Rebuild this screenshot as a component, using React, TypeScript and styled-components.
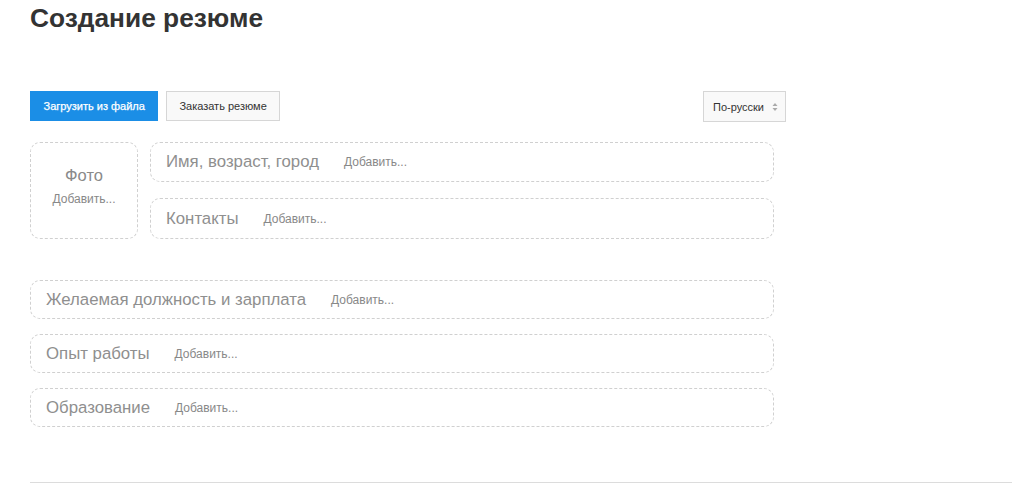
import React from "react";
import styled, { createGlobalStyle } from "styled-components";

const Global = createGlobalStyle`
  html, body { margin: 0; padding: 0; background: #fff; }
  body { font-family: Arial, "Liberation Sans", sans-serif; }
`;

const Page = styled.div`
  padding: 0 0 0 30px;
  width: 982px;
`;

const Title = styled.h1`
  margin: 0;
  padding-top: 3px;
  height: 91px;
  box-sizing: border-box;
  font-size: 26.3px;
  font-weight: bold;
  color: #333;
  line-height: 30px;
`;

const Toolbar = styled.div`
  display: flex;
  align-items: flex-start;
  width: 756px;
  gap: 8px;
`;

const Button = styled.button<{ $primary?: boolean }>`
  height: 30px;
  padding: 0 ${(p) => (p.$primary ? "12.5px" : "12px")};
  font-family: Arial, "Liberation Sans", sans-serif;
  font-size: 11px;
  border-radius: 0;
  cursor: pointer;
  border: 1px solid ${(p) => (p.$primary ? "#1b8ee6" : "#d6d6d6")};
  background: ${(p) => (p.$primary ? "#1b8ee6" : "#f9f9f9")};
  color: ${(p) => (p.$primary ? "#fff" : "#333")};
  font-weight: normal;
  -webkit-text-stroke: ${(p) => (p.$primary ? "0.25px #fff" : "0")};
`;

const Select = styled.div`
  margin-left: auto;
  height: 31px;
  box-sizing: border-box;
  width: 83px;
  border: 1px solid #d6d6d6;
  background: #f9f9f9;
  display: flex;
  align-items: center;
  padding: 0 0 0 9px;
  font-size: 11px;
  color: #333;
  gap: 8px;
`;

const Arrows = styled.svg`
  width: 6px;
  height: 10px;
`;

const Form = styled.div`
  width: 744px;
  margin-top: 20px;
  display: flex;
  flex-direction: column;
`;

const TopGroup = styled.div`
  display: flex;
  gap: 12px;
  margin-bottom: 41px;
`;

const PhotoBox = styled.div`
  width: 108px;
  height: 97px;
  box-sizing: border-box;
  border: 1px dashed #d0d0d0;
  border-radius: 10px;
  display: flex;
  flex-direction: column;
  align-items: center;
  padding-top: 23px;
`;

const PhotoTitle = styled.div`
  font-size: 16.5px;
  color: #8a8a8a;
  line-height: 18px;
`;

const Column = styled.div`
  flex: 1;
  display: flex;
  flex-direction: column;
  gap: 16px;
`;

const Section = styled.div<{ $h?: number }>`
  height: ${(p) => p.$h ?? 39}px;
  box-sizing: border-box;
  border: 1px dashed #d0d0d0;
  border-radius: 10px;
  display: flex;
  align-items: center;
  padding: 0 0 0 15px;
  gap: 25px;
`;

const SectionTitle = styled.span`
  font-size: 16.8px;
  color: #8f8f8f;
`;

const Add = styled.span`
  font-size: 12px;
  color: #888;
`;

const PhotoAdd = styled(Add)`
  margin-top: 8px;
`;

const Bottom = styled.div`
  display: flex;
  flex-direction: column;
  gap: 15px;
`;

const Rule = styled.div`
  margin-top: 55px;
  height: 1px;
  background: #dcdcdc;
  width: 982px;
`;

export default function App() {
  return (
    <Page>
      <Global />
      <Title>Создание резюме</Title>
      <Toolbar>
        <Button $primary>Загрузить из файла</Button>
        <Button>Заказать резюме</Button>
        <Select>
          <span>По-русски</span>
          <Arrows viewBox="0 0 6 10">
            <path d="M0.5 4 L3 1 L5.5 4 Z" fill="#aaa" />
            <path d="M0.5 6 L3 9 L5.5 6 Z" fill="#aaa" />
          </Arrows>
        </Select>
      </Toolbar>
      <Form>
        <TopGroup>
          <PhotoBox>
            <PhotoTitle>Фото</PhotoTitle>
            <PhotoAdd>Добавить...</PhotoAdd>
          </PhotoBox>
          <Column>
            <Section $h={40}>
              <SectionTitle>Имя, возраст, город</SectionTitle>
              <Add>Добавить...</Add>
            </Section>
            <Section $h={41}>
              <SectionTitle>Контакты</SectionTitle>
              <Add>Добавить...</Add>
            </Section>
          </Column>
        </TopGroup>
        <Bottom>
          <Section>
            <SectionTitle>Желаемая должность и зарплата</SectionTitle>
            <Add>Добавить...</Add>
          </Section>
          <Section>
            <SectionTitle>Опыт работы</SectionTitle>
            <Add>Добавить...</Add>
          </Section>
          <Section>
            <SectionTitle>Образование</SectionTitle>
            <Add>Добавить...</Add>
          </Section>
        </Bottom>
      </Form>
      <Rule />
    </Page>
  );
}
